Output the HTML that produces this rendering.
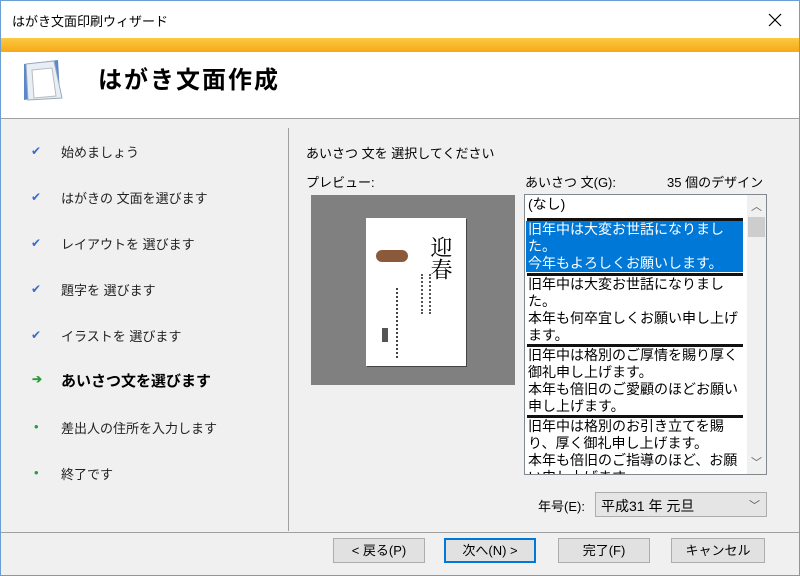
<!DOCTYPE html>
<html><head><meta charset="utf-8"><style>
*{margin:0;padding:0;box-sizing:border-box}
body{width:800px;height:576px;overflow:hidden;background:#f0f0f0;font-family:"Liberation Sans","Noto Sans CJK JP",sans-serif;font-size:13px;color:#000;position:relative}
.a{position:absolute}
.title{left:0;top:0;width:800px;height:38px;background:#fff;border:1px solid #6a9fd4;border-bottom:none}
.band{left:0;top:38px;width:800px;height:14px;background:linear-gradient(#fcc940,#f7a818)}
.hdr{left:0;top:52px;width:800px;height:67px;background:#fff;border-bottom:1px solid #a0a0a0}
.nav{left:61px;font-size:13px;color:#222}
.ck{left:31px;color:#3a6bc8;font-size:12px}
.dot{left:34px;color:#2a9a3a;font-size:13px}
.btn{top:538px;height:25px;background:#e1e1e1;border:1px solid #adadad;text-align:center;line-height:23px;font-size:13px}
.li{left:528px;font-size:14px;line-height:17px}
.sep{left:527px;width:216px;height:3px;background:#111}
</style></head><body>
<div class="a title"><div class="a" style="left:11px;top:10px;font-size:13px">はがき文面印刷ウィザード</div>
<svg class="a" style="left:767px;top:12px" width="14" height="14"><path d="M1 1L13 13M13 1L1 13" stroke="#000" stroke-width="1.2"/></svg></div>
<div class="a band"></div>
<div class="a hdr">
<svg class="a" style="left:18px;top:4px" width="52" height="48"><path d="M6 8 L40 4 L42 38 L6 44Z" fill="#5a88c8"/><path d="M8 8 L36 5 L44 42 L10 44Z" fill="#e8eef6" stroke="#9ab"/><path d="M14 14 L34 12 L38 40 L16 42Z" fill="#fff" stroke="#bbb"/></svg>
<div class="a" style="left:98px;top:8px;font-size:24px;font-weight:bold;letter-spacing:2px">はがき文面作成</div></div>
<div class="a" style="left:288px;top:128px;width:1px;height:403px;background:#a0a0a0"></div>
<div class="a" style="left:0;top:532px;width:800px;height:1px;background:#a0a0a0"></div>
<div class="a" style="left:0;top:38px;width:1px;height:538px;background:#6a9fd4"></div>
<div class="a" style="left:799px;top:38px;width:1px;height:538px;background:#6a9fd4"></div>
<div class="a" style="left:0;top:575px;width:800px;height:1px;background:#6a9fd4"></div>

<span class="a ck" style="top:144px">✔</span><span class="a nav" style="top:142px">始めましょう</span>
<span class="a ck" style="top:190px">✔</span><span class="a nav" style="top:188px">はがきの 文面を選びます</span>
<span class="a ck" style="top:236px">✔</span><span class="a nav" style="top:234px">レイアウトを 選びます</span>
<span class="a ck" style="top:282px">✔</span><span class="a nav" style="top:280px">題字を 選びます</span>
<span class="a ck" style="top:328px">✔</span><span class="a nav" style="top:326px">イラストを 選びます</span>
<span class="a" style="left:32px;top:372px;color:#2a9a3a;font-size:12px;font-weight:bold">➔</span><span class="a nav" style="top:370px;font-size:15px;font-weight:bold;color:#000">あいさつ文を選びます</span>
<span class="a dot" style="top:419px">•</span><span class="a nav" style="top:418px">差出人の住所を入力します</span>
<span class="a dot" style="top:465px">•</span><span class="a nav" style="top:464px">終了です</span>

<div class="a" style="left:306px;top:143px">あいさつ 文を 選択してください</div>
<div class="a" style="left:306px;top:172px">プレビュー:</div>
<div class="a" style="left:311px;top:195px;width:204px;height:190px;background:#808080">
<div class="a" style="left:55px;top:23px;width:100px;height:148px;background:#fff;box-shadow:1px 1px 0 #444">
<div class="a" style="left:10px;top:32px;width:32px;height:12px;background:#8a5a3a;border-radius:6px"></div>
<div class="a" style="left:62px;top:18px;font-size:22px;line-height:26px;writing-mode:vertical-rl;font-family:'Noto Serif CJK SC',serif">迎春</div>
<div class="a" style="left:55px;top:56px;width:10px;height:40px;border-left:2px dotted #555;border-right:2px dotted #555"></div>
<div class="a" style="left:30px;top:70px;width:4px;height:70px;border-left:2px dotted #444"></div>
<div class="a" style="left:16px;top:110px;width:6px;height:14px;background:#555"></div>
</div></div>
<div class="a" style="left:525px;top:172px">あいさつ 文(G):</div>
<div class="a" style="left:667px;top:172px">35 個のデザイン</div>
<div class="a" style="left:524px;top:194px;width:243px;height:281px;background:#fff;border:1px solid #828790;overflow:hidden">
<div class="a" style="left:222px;top:0;width:19px;height:279px;background:#f0f0f0"></div>
<div class="a" style="left:226px;top:3px;font-size:11px;color:#606060">︿</div>
<div class="a" style="left:223px;top:22px;width:17px;height:20px;background:#cdcdcd"></div>
<div class="a" style="left:226px;top:259px;font-size:11px;color:#606060">﹀</div>
</div>
<div class="a li" style="top:196px">(なし)</div>
<div class="a sep" style="top:218px"></div>
<div class="a" style="left:526px;top:221px;width:217px;height:51px;background:#0078d7"></div>
<div class="a li" style="top:221px;color:#fff">旧年中は大変お世話になりまし<br>た。<br>今年もよろしくお願いします。</div>
<div class="a sep" style="top:273px"></div>
<div class="a li" style="top:276px">旧年中は大変お世話になりまし<br>た。<br>本年も何卒宜しくお願い申し上げ<br>ます。</div>
<div class="a sep" style="top:344px"></div>
<div class="a li" style="top:347px">旧年中は格別のご厚情を賜り厚く<br>御礼申し上げます。<br>本年も倍旧のご愛顧のほどお願い<br>申し上げます。</div>
<div class="a sep" style="top:415px"></div>
<div class="a li" style="top:418px;height:56px;overflow:hidden">旧年中は格別のお引き立てを賜<br>り、厚く御礼申し上げます。<br>本年も倍旧のご指導のほど、お願<br>い申し上げます。</div>

<div class="a" style="left:538px;top:496px">年号(E):</div>
<div class="a" style="left:595px;top:492px;width:172px;height:25px;background:#e5e5e5;border:1px solid #adadad;padding:3px 5px;font-size:14px">平成31 年 元旦<span class="a" style="right:6px;top:4px;font-size:11px;color:#555">﹀</span></div>

<div class="a btn" style="left:333px;width:92px">&lt; 戻る(P)</div>
<div class="a btn" style="left:444px;width:92px;border:2px solid #0078d7;line-height:21px">次へ(N) &gt;</div>
<div class="a btn" style="left:558px;width:92px">完了(F)</div>
<div class="a btn" style="left:671px;width:94px">キャンセル</div>
</body></html>
